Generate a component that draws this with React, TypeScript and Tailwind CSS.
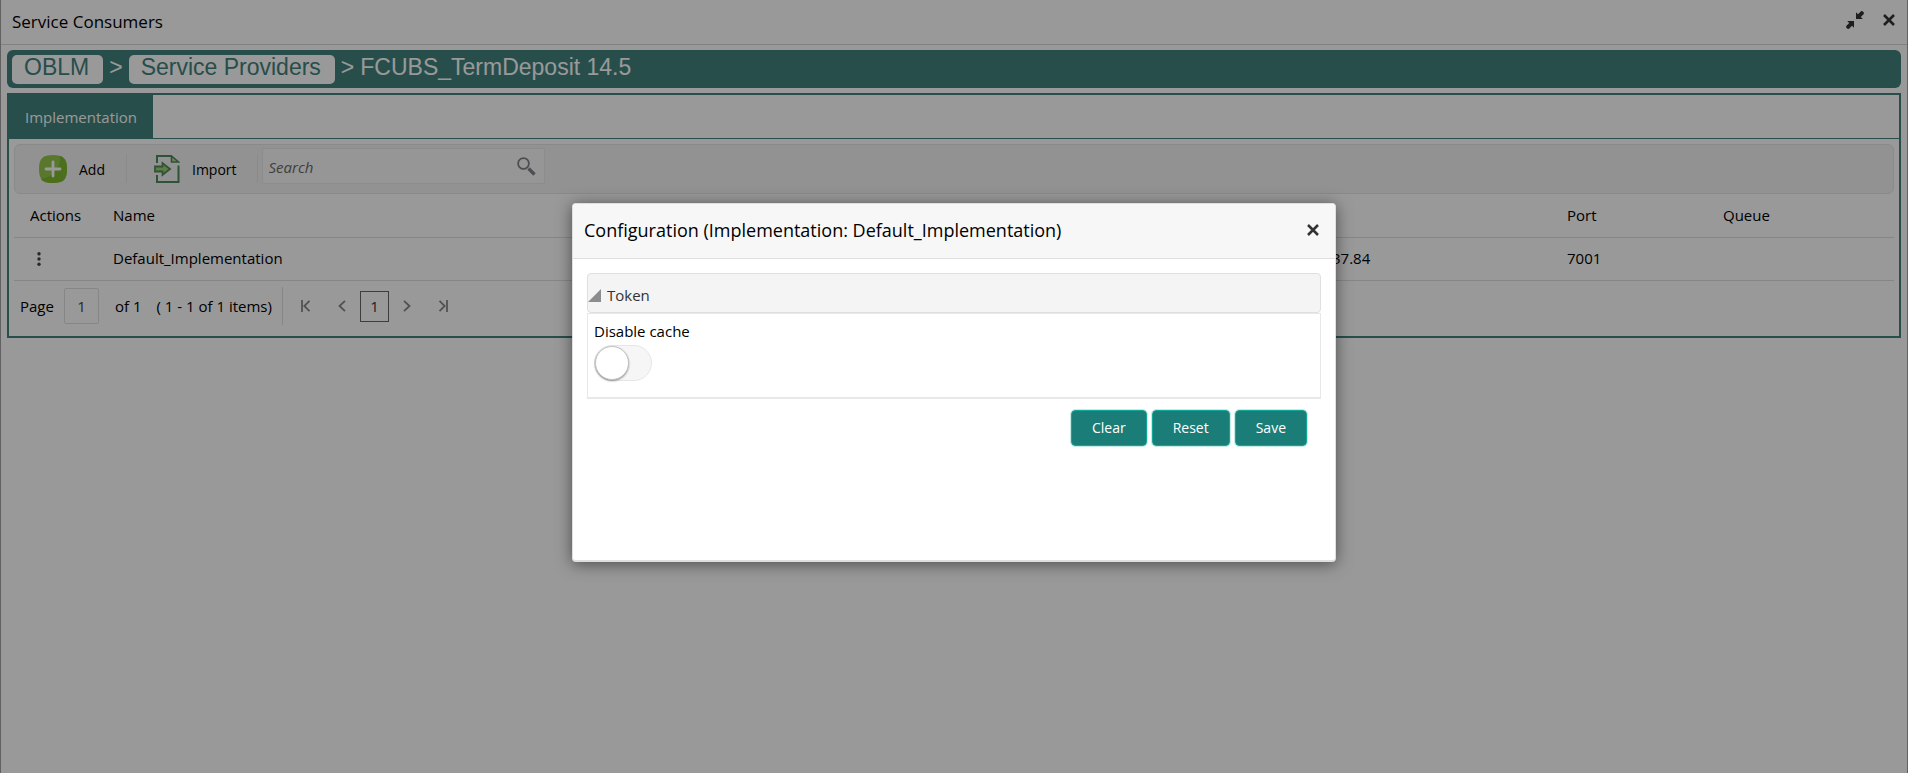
import { useState } from "react";
import type { ReactNode } from "react";

const COLUMNS = [
  { key: "actions", width: "w-[83px]" },
  { key: "name", width: "" },
  { key: "host", width: "w-[235px]" },
  { key: "port", width: "w-[156px]" },
  { key: "queue", width: "w-[187px]" },
];

function CloseIcon() {
  return (
    <svg width="12" height="12" viewBox="0 0 12 12" fill="none" stroke="currentColor" strokeWidth="2.6">
      <path d="M1 1L11 11M11 1L1 11" />
    </svg>
  );
}

function CollapseIcon() {
  return (
    <svg width="18" height="18" viewBox="0 0 18 18" fill="currentColor">
      <path d="M10 8V1.200L12 3.200L15 .2Q16.200 -.2 17.200 .8T17.800 3L14.800 6L16.800 8Z" />
      <path d="M8 10V16.800L6 14.800L3 17.800Q1.800 18.200 .8 17.200T.2 15L3.200 12L1.200 10Z" />
    </svg>
  );
}

function AddIcon() {
  return (
    <svg width="28" height="28" viewBox="0 0 28 28">
      <path d="M14 0C24 0 28 3 28 14S24 28 14 28S0 25 0 14S4 0 14 0Z" fill="#96c84c" />
      <path d="M21 1C26.500 3 28 7 28 14C28 25 24 28 14 28C8 28 4 27 2 24C13 22 22 14 21 1Z" fill="#7fb92f" />
      <path d="M14 7V21M7 14H21" stroke="#fff" strokeWidth="2.800" strokeLinecap="round" />
    </svg>
  );
}

function ImportIcon() {
  return (
    <svg width="26" height="28" viewBox="0 0 26 28" fill="none">
      <path d="M3 8V1H18M24.500 10.500V27H3V20" stroke="#4f8a5c" strokeWidth="2" />
      <path d="M17.500 1V7H24.500Z" fill="#b9dc9c" stroke="#4f8a5c" strokeWidth="1.600" />
      <path d="M1 11.500H8.500V8L16 14L8.500 20V16.500H1Z" fill="#a3d16f" stroke="#4f8a5c" strokeWidth="1.800" />
    </svg>
  );
}

function SearchIcon() {
  return (
    <svg width="19" height="19" viewBox="0 0 19 19" fill="none">
      <circle cx="6.500" cy="6.500" r="5.400" stroke="#808387" strokeWidth="1.800" />
      <path d="M11.500 11.500L17.500 17.500" stroke="#808387" strokeWidth="3.400" />
    </svg>
  );
}

function PagerIcon({ children }: { children: ReactNode }) {
  return (
    <svg width="10" height="12" viewBox="0 0 10 12" fill="none" stroke="#85888b" strokeWidth="1.800">
      {children}
    </svg>
  );
}

function Crumb({ children }: { children: string }) {
  return (
    <a href="#" className="flex h-[29px] items-center rounded-[5px] bg-white pr-3.5 pb-1 pl-3 text-[#41827e]">
      {children}
    </a>
  );
}

function ActionButton({ children }: { children: string }) {
  return (
    <button
      type="button"
      className="h-9 rounded-sm border border-[#12a698] bg-[#1b7d78] px-5 text-sm text-white outline outline-[#c5ebe7]"
    >
      {children}
    </button>
  );
}

function ServiceConsumers() {
  return (
    <div className="min-h-screen border-x border-[#a2a2a2] bg-white">
      <header className="flex h-[45px] items-center justify-between border-b border-[#d8d8d8] pr-3 pl-[11px]">
        <h1 className="text-[17px]">Service Consumers</h1>
        <div className="flex items-center gap-[19px] pb-1 text-[#333]">
          <button type="button" aria-label="Collapse"><CollapseIcon /></button>
          <button type="button" aria-label="Close window"><CloseIcon /></button>
        </div>
      </header>

      <main className="px-1.5 pt-[5px]">
        <nav
          aria-label="Breadcrumb"
          className="flex h-[38px] items-center gap-1.5 rounded-md bg-[#41827e] px-[5px] font-['Liberation_Sans',sans-serif] text-[23px] text-white"
        >
          <Crumb>OBLM</Crumb>
          <span className="pb-1">&gt;</span>
          <Crumb>Service Providers</Crumb>
          <span className="pb-1">&gt;</span>
          <span className="pb-1">FCUBS_TermDeposit 14.5</span>
        </nav>

        <section className="mt-[5px] border-2 border-[#41827e]">
          <div className="flex border-b border-[#41827e]">
            <button type="button" className="h-[43px] bg-[#41827e] px-4 pt-0.5 text-[15px] text-white">
              Implementation
            </button>
          </div>

          <div className="px-[5px] pt-[5px]">
            <div className="flex h-[50px] items-center rounded-md border border-[#e6e6e6] bg-[#f3f3f3] pl-6">
              <button type="button" className="flex h-7 items-center gap-3 border-r border-[#e6e6e6] pr-[21px] text-sm">
                <AddIcon />
                <span className="pt-0.5">Add</span>
              </button>
              <button type="button" className="flex h-7 items-center gap-3 border-r border-[#e6e6e6] pr-5 pl-[27px] text-sm">
                <ImportIcon />
                <span className="pt-0.5">Import</span>
              </button>
              <label className="mb-1.5 ml-1 flex h-9 w-[283px] items-center rounded-xs border border-[#e9e9e9] bg-[#fbfbfb] pr-2 pl-1.5">
                <input
                  type="search"
                  aria-label="Search"
                  placeholder="Search"
                  className="min-w-0 flex-1 bg-transparent pt-0.5 text-[15px] outline-none placeholder:text-[#6a6a6a] placeholder:italic"
                />
                <SearchIcon />
              </label>
            </div>

            <table className="w-full table-fixed text-left text-[15px]">
              <colgroup>
                {COLUMNS.map((column) => (
                  <col key={column.key} className={column.width} />
                ))}
              </colgroup>
              <thead>
                <tr className="h-[43px] border-b border-[#dfdfdf]">
                  <th className="pl-4 font-normal">Actions</th>
                  <th className="pl-4 font-normal">Name</th>
                  <td />
                  <th className="pl-4 font-normal">Port</th>
                  <th className="pl-4 font-normal">Queue</th>
                </tr>
              </thead>
              <tbody>
                <tr className="h-[43px] border-b border-[#dfdfdf]">
                  <td className="pl-4">
                    <button type="button" aria-label="Row actions" className="block px-1.5">
                      <svg width="6" height="16" viewBox="0 0 6 16" fill="#444">
                        <circle cx="3" cy="2.800" r="1.700" />
                        <circle cx="3" cy="8" r="1.700" />
                        <circle cx="3" cy="13.200" r="1.700" />
                      </svg>
                    </button>
                  </td>
                  <td className="pl-4">Default_Implementation</td>
                  <td className="pl-4">37.84</td>
                  <td className="pl-4">7001</td>
                  <td />
                </tr>
              </tbody>
            </table>

            <div className="flex h-[55px] items-center pb-1 pl-1.5 text-[15px]">
              <label className="flex items-center gap-2.5">
                Page
                <input
                  defaultValue="1"
                  className="h-9 w-[35px] rounded-xs border border-[#e0e0e0] text-center text-[#444] outline-none"
                />
              </label>
              <span className="ml-4">of 1</span>
              <span className="ml-[15px]">( 1 - 1 of 1 items)</span>
              <span className="ml-2.5 h-[38px] border-l border-[#e0e0e0]" />
              <button type="button" aria-label="First page" className="ml-[18px]">
                <PagerIcon><path d="M1 0V12M8.500 .8L3.300 6L8.500 11.200" /></PagerIcon>
              </button>
              <button type="button" aria-label="Previous page" className="ml-[26px]">
                <PagerIcon><path d="M8 .8L2.500 6L8 11.200" /></PagerIcon>
              </button>
              <button type="button" className="ml-[13px] h-[31px] w-[29px] border border-[#666] text-[#333]">1</button>
              <button type="button" aria-label="Next page" className="ml-[13px]">
                <PagerIcon><path d="M2 .8L7.500 6L2 11.200" /></PagerIcon>
              </button>
              <button type="button" aria-label="Last page" className="ml-[26px]">
                <PagerIcon><path d="M9 0V12M1.500 .8L6.700 6L1.500 11.200" /></PagerIcon>
              </button>
            </div>
          </div>
        </section>
      </main>
    </div>
  );
}

function ConfigurationDialog() {
  const [cacheDisabled, setCacheDisabled] = useState(false);

  return (
    <div
      role="dialog"
      aria-labelledby="dialog-title"
      className="min-h-[359px] w-[764px] overflow-hidden rounded-sm border border-b-2 border-[#dfdfdf] bg-white shadow-[0_2px_16px_rgba(0,0,0,0.5)]"
    >
      <header className="flex h-[55px] items-center justify-between border-b border-[#dfdfdf] bg-[#f7f7f7] pr-4 pb-0.5 pl-[11px]">
        <h2 id="dialog-title" className="text-lg">Configuration (Implementation: Default_Implementation)</h2>
        <button type="button" aria-label="Close" className="text-[#333]"><CloseIcon /></button>
      </header>

      <div className="px-3.5 pt-3.5">
        <button
          type="button"
          aria-expanded="true"
          className="flex h-10 w-full items-center gap-1.5 rounded border border-[#dfdfdf] bg-[#f4f4f4] pt-1 text-[15px] text-[#333]"
        >
          <svg width="13" height="13" viewBox="0 0 13 13" fill="#8b8e91">
            <path d="M13 0V13H0Z" />
          </svg>
          Token
        </button>
        <div className="flex h-[86px] flex-col items-start gap-[3px] border border-b-2 border-[#e8e8e8] px-1.5 pt-[7px]">
          <label htmlFor="disable-cache" className="text-[15px] leading-[21px]">Disable cache</label>
          <input
            id="disable-cache"
            type="checkbox"
            role="switch"
            checked={cacheDisabled}
            onChange={(event) => setCacheDisabled(event.target.checked)}
            className="flex h-9 w-[58px] appearance-none items-center rounded-full border border-[#e6e6e6] bg-[#f6f6f6] before:block before:size-[34px] before:rounded-full before:border before:border-[#c4c4c4] before:bg-white before:shadow-[0_1px_2px_rgba(0,0,0,0.4)] before:content-[''] checked:justify-end checked:bg-[#1b7d78]"
          />
        </div>
        <div className="flex justify-end gap-[5px] pt-[11px] pr-3.5">
          <ActionButton>Clear</ActionButton>
          <ActionButton>Reset</ActionButton>
          <ActionButton>Save</ActionButton>
        </div>
      </div>
    </div>
  );
}

export default function App() {
  return (
    <div className="relative font-['Open_Sans','Noto_Sans',sans-serif] text-black">
      <ServiceConsumers />
      <div className="absolute inset-0 flex items-start justify-center bg-black/40 pt-[203px]">
        <ConfigurationDialog />
      </div>
    </div>
  );
}
